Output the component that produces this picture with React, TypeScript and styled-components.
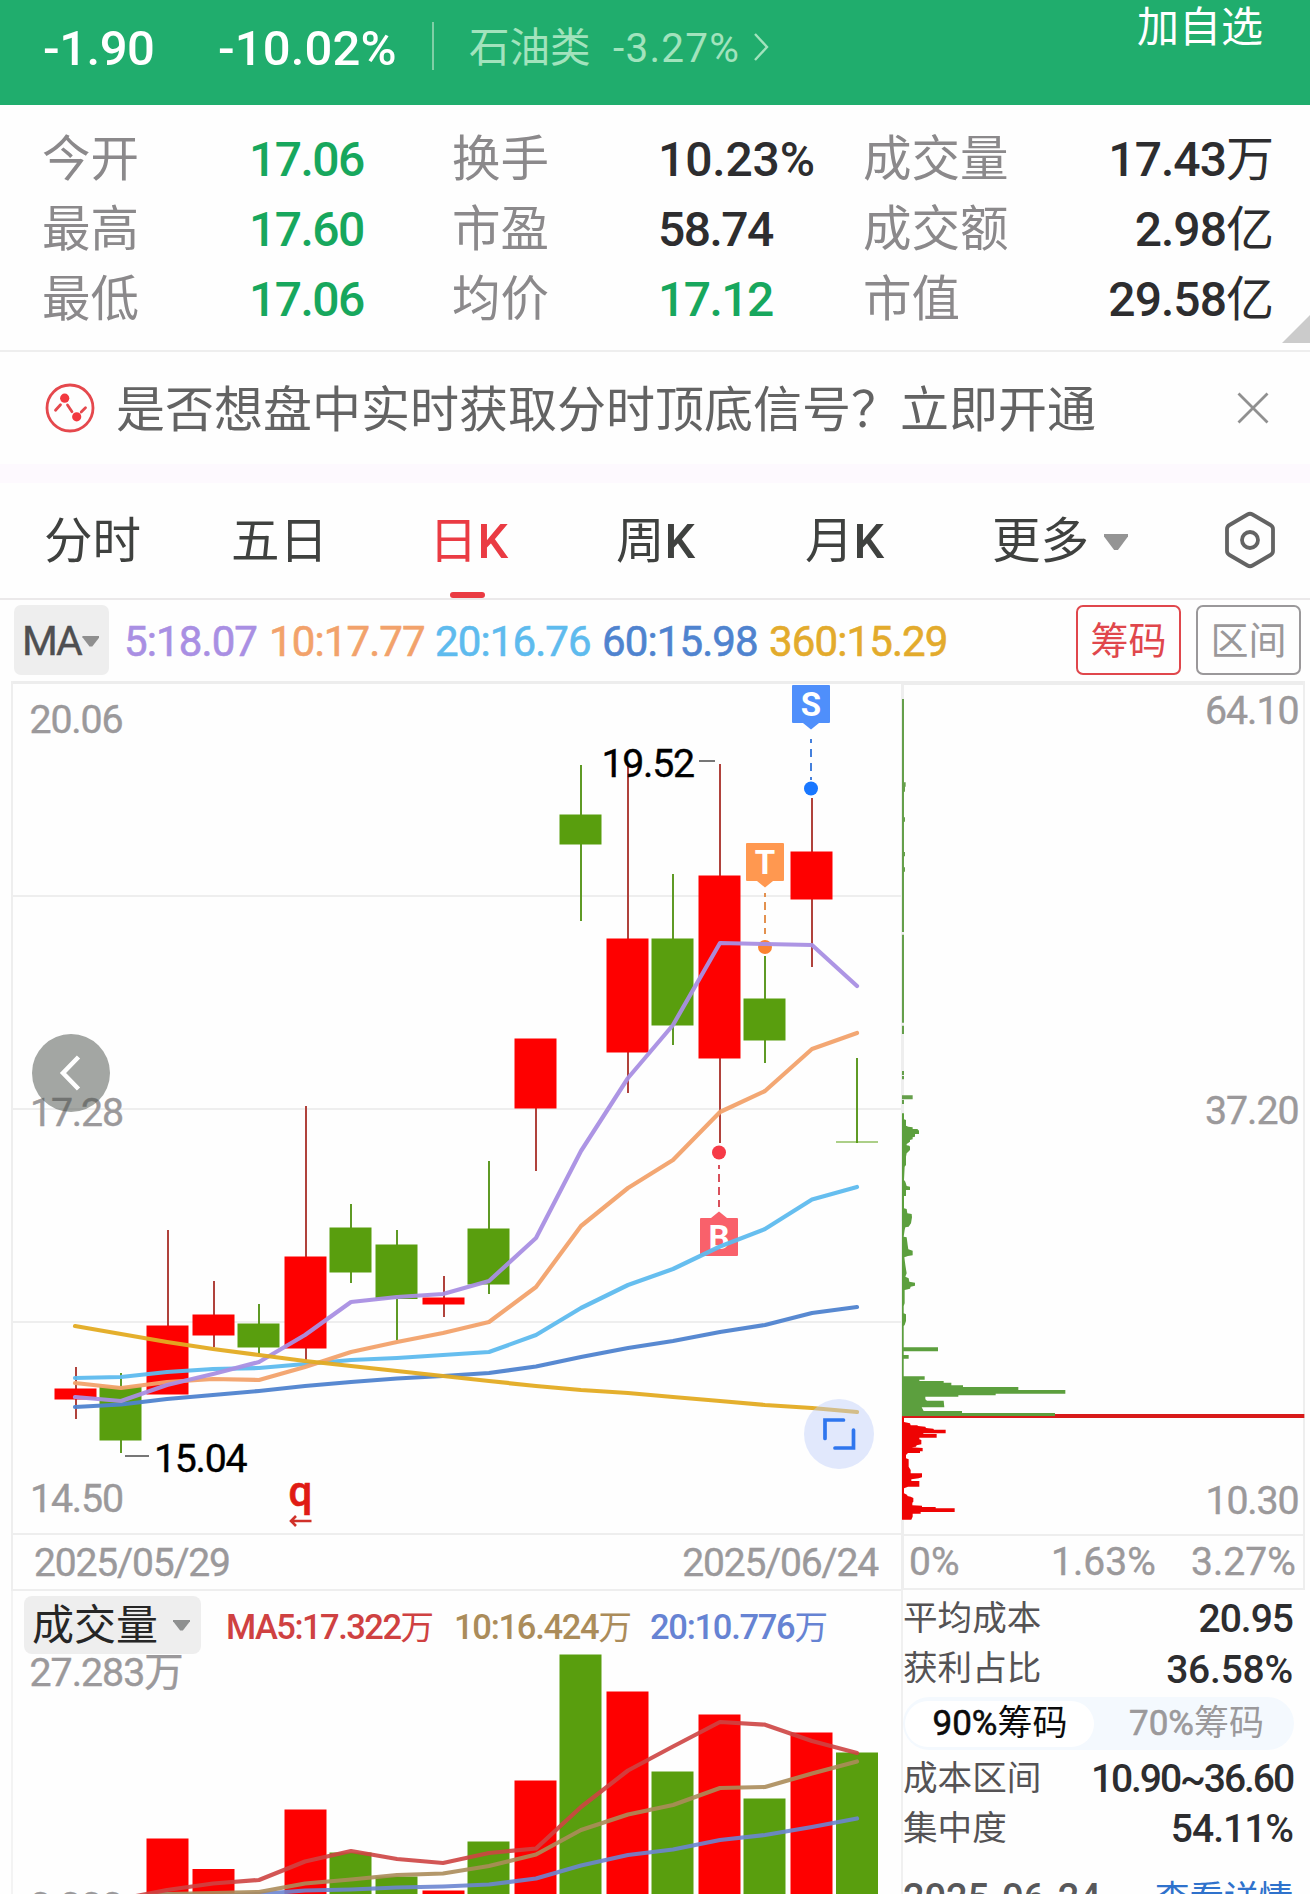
import React from 'react';
import styled, { createGlobalStyle } from 'styled-components';

const FONT = `Roboto, "Noto Sans CJK SC", sans-serif`;
const GREY = '#9b999b';
const RED = '#fe0000';
const GREEN = '#599e0e';
const LINE = '#eeeeee';

const Global = createGlobalStyle`
  html, body { margin: 0; padding: 0; background: #fefefe; overflow: hidden; }
  * { box-sizing: border-box; }
  button { font: inherit; letter-spacing: inherit; padding: 0; border: 0; background: none; }
  svg { display: block; }
`;

const Page = styled.main`
  width: 1310px;
  height: 1894px;
  overflow: hidden;
  display: flex;
  flex-direction: column;
  font-family: ${FONT};
  white-space: nowrap;
`;

const Header = styled.header`
  height: 105px;
  flex: none;
  display: flex;
  align-items: flex-start;
  padding-left: 43px;
  background: #20ad6d;
  color: #fff;
`;

const Quote = styled.span<{ $w: number; $spacing?: number }>`
  width: ${p => p.$w}px;
  flex: none;
  font-size: 49px;
  font-weight: 500;
  line-height: 98px;
  letter-spacing: ${p => p.$spacing || 0}em;
`;

const Divider = styled.span`
  width: 2px;
  height: 48px;
  margin: 22px 35px 0 0;
  background: #7fcfa6;
`;

const Sector = styled.span<{ $w: number; $spacing?: number }>`
  width: ${p => p.$w}px;
  flex: none;
  font-size: 40.5px;
  line-height: 97px;
  letter-spacing: ${p => p.$spacing || 0}em;
  color: #a2e3bd;
`;

const SectorArrow = styled.svg`
  margin-top: 31px;
`;

const Watch = styled.button`
  margin: 0 47px 0 auto;
  font-size: 42px;
  line-height: 56px;
  color: #fff;
`;

const Stats = styled.section`
  position: relative;
  flex: none;
  height: 247px;
  padding: 19px 36px 0 42px;
  display: grid;
  grid-template-columns: 207px 203px 206px 205px 160px 1fr;
  grid-auto-rows: 70px;
  border-bottom: 2px solid ${LINE};
`;

const StatLabel = styled.span`
  font-size: 48.5px;
  line-height: 71px;
  color: #8b898b;
`;

const StatValue = styled.span<{ $green?: boolean; $right?: boolean; $wide?: boolean }>`
  font-size: 48px;
  font-weight: 500;
  line-height: 71px;
  letter-spacing: ${p => (p.$wide ? -0.003 : p.$right ? -0.02 : -0.032)}em;
  text-align: ${p => (p.$right ? 'right' : 'left')};
  color: ${p => (p.$green ? '#17a75d' : '#2d2d2f')};
`;

const Unit = styled.span<{ $size?: number }>`
  font-size: ${p => p.$size || 48}px;
  font-weight: 400;
  letter-spacing: 0;
`;

const Corner = styled.span`
  position: absolute;
  right: 0;
  bottom: 7px;
  width: 28px;
  height: 28px;
  background: #cbcbcb;
  clip-path: polygon(100% 0, 100% 100%, 0 100%);
`;

const Notice = styled.section`
  height: 112px;
  flex: none;
  display: flex;
  align-items: center;
  padding: 0 40px 0 45px;
  font-size: 49px;
  color: #636363;
`;

const NoticeText = styled.span`
  margin-left: 21px;
  margin-right: auto;
  padding-top: 5px;
  line-height: 107px;
`;

const Stripe = styled.div`
  height: 19px;
  flex: none;
  background: #fdf9fe;
`;

const Tabs = styled.nav`
  height: 117px;
  flex: none;
  display: grid;
  grid-template-columns: 187px 198px 187px 189px 187px 237px 1fr;
  grid-template-rows: 115px;
  padding-left: 44px;
  border-bottom: 2px solid #ebe9ea;
`;

const Tab = styled.button<{ $active?: boolean }>`
  position: relative;
  display: flex;
  align-items: center;
  font-size: 48.5px;
  line-height: 100px;
  padding-top: 3px;
  color: ${p => (p.$active ? '#ea3b43' : '#3f413f')};
  &::after {
    content: '';
    display: ${p => (p.$active ? 'block' : 'none')};
    position: absolute;
    left: 21px;
    top: 109px;
    width: 35px;
    height: 6px;
    border-radius: 3px;
    background: #ea3b43;
  }
`;

const Letter = styled.span`
  font-weight: 500;
`;

const Caret = styled.span<{ $w: number; $h: number; $ml: number; $c?: string }>`
  width: ${p => p.$w}px;
  height: ${p => p.$h}px;
  margin-left: ${p => p.$ml}px;
  background: ${p => p.$c || '#949494'};
  clip-path: polygon(0 0, 100% 0, 100% 15%, 58% 100%, 42% 100%, 0 15%);
`;

const HexIcon = styled.svg`
  align-self: center;
  margin: -1px 0 0 -9px;
`;

const IndicatorBar = styled.section`
  height: 81px;
  flex: none;
  display: flex;
  align-items: flex-start;
  padding: 5px 9px 0 14px;
`;

const MaChip = styled.button`
  width: 95px;
  height: 70px;
  padding: 2px 0 0 8px;
  display: flex;
  align-items: center;
  margin-right: 15px;
  border-radius: 7px;
  background: #eeeeee;
  font-size: 41px;
  letter-spacing: -0.055em;
  color: #4f4f51;
  -webkit-text-stroke: 0.4px currentColor;
`;

const MaValue = styled.span<{ $c: string; $w: number }>`
  width: ${p => p.$w}px;
  flex: none;
  font-size: 42px;
  line-height: 73px;
  letter-spacing: -0.021em;
  color: ${p => p.$c};
  -webkit-text-stroke: 0.6px currentColor;
`;

const Outline = styled.button<{ $c: string }>`
  width: 105px;
  height: 70px;
  margin-left: 15px;
  border: 2px solid ${p => p.$c};
  border-radius: 7px;
  font-size: 38px;
  line-height: 68px;
  color: ${p => p.$c};
`;

const Spacer = styled.span`
  flex: 1;
`;

const Body = styled.div`
  flex: 1;
  min-height: 0;
  display: grid;
  grid-template-columns: 901px 409px;
`;

const Column = styled.div`
  display: flex;
  flex-direction: column;
  min-width: 0;
`;

const ChartFrame = styled.div`
  position: relative;
  height: 854px;
`;

const VolumeSvg = styled.svg`
  overflow: visible;
`;

const Back = styled.button`
  position: absolute;
  left: 32px;
  top: 353px;
  width: 78px;
  height: 78px;
  border-radius: 50%;
  background: rgba(72, 77, 72, 0.5);
`;

const Expand = styled.button`
  position: absolute;
  left: 804px;
  top: 718px;
  width: 70px;
  height: 70px;
  border-radius: 50%;
  background: rgba(190, 207, 251, 0.45);
`;

const Dates = styled.div`
  height: 56px;
  margin-left: 11px;
  padding: 0 23px 0 21px;
  display: flex;
  justify-content: space-between;
  border: solid ${LINE};
  border-width: 0 0 2px 2px;
  font-size: 39px;
  line-height: 56px;
  letter-spacing: -0.03em;
  color: ${GREY};
  -webkit-text-stroke: 0.4px currentColor;
`;

const VolumeBar = styled.div`
  height: 63px;
  margin-left: 11px;
  border-left: 2px solid #f3f3f3;
  padding: 5px 0 0 11px;
  display: flex;
`;

const VolumeChip = styled.button`
  width: 177px;
  height: 58px;
  margin-right: 25px;
  padding-left: 8px;
  display: flex;
  align-items: center;
  border-radius: 8px;
  background: #eeeeee;
  font-size: 42px;
  line-height: 52px;
  color: #262626;
`;

const ChipText = styled.span`
  padding-top: 1px;
`;

const VolumeMa = styled.span<{ $c: string; $w: number; $spacing?: number }>`
  width: ${p => p.$w}px;
  flex: none;
  font-size: 34.5px;
  font-weight: 500;
  line-height: 62px;
  letter-spacing: ${p => p.$spacing || -0.037}em;
  color: ${p => p.$c};
`;

const Percents = styled.div`
  height: 56px;
  width: 404px;
  padding: 0 4px 0 5px;
  display: grid;
  grid-template-columns: 142px 140px 1fr;
  border: solid ${LINE};
  border-width: 2px 2px 2px 3px;
  font-size: 39px;
  line-height: 53px;
  letter-spacing: 0.002em;
  color: ${GREY};
  -webkit-text-stroke: 0.4px currentColor;
`;

const Details = styled.div`
  flex: 1;
  padding: 3px 17px 0 0;
  border-left: 2px solid #f0f0f0;
`;

const Row = styled.div<{ $h: number }>`
  height: ${p => p.$h}px;
  display: flex;
  justify-content: space-between;
  align-items: center;
`;

const RowLabel = styled.span`
  font-size: 34.6px;
  line-height: 48px;
  margin-top: -2px;
  color: #555355;
`;

const RowValue = styled.span<{ $spacing?: number }>`
  font-size: 39px;
  font-weight: 500;
  line-height: 48px;
  padding-top: 1px;
  letter-spacing: ${p => (p.$spacing === undefined ? -0.026 : p.$spacing)}em;
  color: #2d2d2f;
`;

const Toggle = styled.div`
  width: 391px;
  height: 53px;
  margin: 3px 0 3px;
  padding: 4px 2px;
  display: grid;
  grid-template-columns: 189px 1fr;
  border-radius: 27px;
  background: #f4f9fe;
`;

const Option = styled.button<{ $on?: boolean }>`
  border-radius: 23px;
  background: ${p => (p.$on ? '#fff' : 'transparent')};
  font-size: 35px;
  line-height: 46px;
  letter-spacing: 0;
  padding-left: ${p => (p.$on ? 1 : 7)}px;
  color: ${p => (p.$on ? '#0c0c0c' : GREY)};
`;

const Percent = styled.span`
  -webkit-text-stroke: 0.6px currentColor;
`;

const DateText = styled.span`
  font-size: 38px;
  font-weight: 500;
  line-height: 48px;
  letter-spacing: -0.002em;
  color: #58585a;
`;

const Link = styled.a`
  font-size: 34.5px;
  line-height: 48px;
  color: #2f72cc;
`;

const Label = styled.text<{ $dark?: boolean }>`
  font-family: ${FONT};
  font-size: 39.3px;
  fill: ${p => (p.$dark ? '#000' : GREY)};
  stroke: ${p => (p.$dark ? '#000' : GREY)};
  stroke-width: 0.4px;
`;

const Tag = styled.text`
  font-family: ${FONT};
  font-size: 33px;
  font-weight: 700;
  text-anchor: middle;
  fill: #fff;
`;

const ExRight = styled.text`
  font-family: ${FONT};
  font-size: 42px;
  font-weight: 500;
  text-anchor: middle;
  fill: #e01b14;
  stroke: #e01b14;
  stroke-width: 0.6px;
`;

const XS = [75, 121, 167, 213, 259, 305, 351, 397, 443, 489, 536, 581, 628, 673, 720, 765, 812, 857];
const WICKS = [76, 121, 168, 214, 259, 306, 351, 397, 444, 489, 536, 581, 628, 673, 720, 765, 812, 857];
const LEFT = [54.5, 99.5, 146.5, 192.5, 237.5, 284.5, 329.5, 375.5, 422.5, 467.5, 514.5, 559.5, 606.5, 651.5, 698.5, 743.5, 790.5, 836];

type Candle = [up: 0 | 1, top: number, bottom: number, high: number, low: number];
const CANDLES: Candle[] = [
  [1, 1388.5, 1399.5, 1367, 1419],
  [0, 1386.5, 1440.5, 1373, 1453],
  [1, 1325.5, 1394.5, 1230, 1394],
  [1, 1314.5, 1335.5, 1281, 1347],
  [0, 1323.5, 1347.5, 1304, 1354],
  [1, 1256.5, 1348.5, 1106, 1360],
  [0, 1227.5, 1272.5, 1204, 1283],
  [0, 1244.5, 1299, 1230, 1340],
  [1, 1297.5, 1304.5, 1276, 1317],
  [0, 1228.5, 1284.5, 1161, 1294],
  [1, 1038.5, 1108.5, 1039, 1171],
  [0, 814.5, 844.5, 765, 921],
  [1, 938.5, 1052.5, 765, 1093],
  [0, 938.5, 1025.5, 874, 1045],
  [1, 875.5, 1058.5, 764, 1143],
  [0, 998.5, 1040.5, 956, 1063],
  [1, 851.5, 899.5, 798, 967],
  [0, 1141.3, 1142.7, 1058, 1143],
];

const MA_LINES: [string, number[]][] = [
  ['#4f83cf', [1407, 1404.5, 1399, 1395, 1391, 1386, 1382, 1378.5, 1376, 1373, 1366.5, 1357, 1348, 1341, 1332, 1325, 1313, 1307]],
  ['#5ebbee', [1378, 1377, 1372, 1369, 1368, 1364, 1360, 1358, 1355, 1352, 1335, 1308, 1285, 1269, 1246.5, 1229, 1199.5, 1187]],
  ['#f2a26b', [1383, 1388, 1382, 1379, 1380, 1367, 1352, 1342, 1333, 1322, 1287, 1226, 1188, 1160, 1112, 1091, 1049, 1033]],
  ['#a98fe3', [1397, 1401, 1385, 1374, 1362, 1335, 1302, 1297, 1294, 1281, 1238, 1151, 1078, 1025, 943, 944, 945, 986]],
  ['#e3ab22', [1326, 1334, 1342, 1349, 1355, 1361, 1366, 1371, 1376, 1381, 1386, 1390, 1393, 1397, 1401, 1405, 1408, 1412]],
];

const VOLUMES = [0, 0, 1838.5, 1869, 0, 1809.5, 1852.5, 1876.5, 1890.5, 1841.5, 1780.5, 1654.5, 1691.5, 1771.5, 1714.5, 1798.5, 1732.5, 1752.5];

const VOLUME_LINES: [string, number[]][] = [
  ['#6c85d1', [1900, 1899, 1894, 1896, 1894, 1890.5, 1889.5, 1887.5, 1886.5, 1884.5, 1878.5, 1865.5, 1855, 1849.5, 1840, 1835, 1827, 1818.5]],
  ['#ab8c5a', [1900, 1898, 1894, 1893, 1892, 1883.5, 1879.5, 1875, 1873.5, 1866, 1854.5, 1830, 1814.5, 1805, 1788, 1787, 1773.5, 1761.5]],
  ['#cd4442', [1910, 1899, 1890, 1883.5, 1880, 1861.5, 1851, 1859, 1863, 1853, 1848.5, 1807, 1770.5, 1746.5, 1722, 1724.7, 1741, 1753]],
];

const points = (ys: number[]) => ys.map((y, i) => `${XS[i]},${y}`).join(' ');

const CHIP_THIN = 'M66-1293h6v699h-6zM66-586h6v264h-6zM66-313h6v25h-6zM66-177h6v12h-6zM66-162h6v10h-6zM66-104h32v12h-32zM66-90h6v12h-6zM72-1043h5v13h-2v15h-3zM72-938h3v13h-3zM72-834h3v13h-3zM72-788h3v13h-3z';
const CHIP_LOSS = 'M66,-50L72,-50L72,-32L78,-30L78,-13L85,-10L98,-8L98,-3L112,-3L117,2V12H105V20L98,22V28L90,30V35L80,42V46L88,47L90,50V60L85,65L80,70L78,80V105L74,110L72,150L76,155L80,168L90,170V180H78V198H72V235L80,237L82,250L95,252L96,262L93,280L86,290L76,292L74,300L71,320L80,322L83,345L85,358L98,362V376L84,378L73,382L76,405L80,430L76,440L86,445L88,455L105,458V467L92,470L90,476L74,480V520L71,528V550L78,553V573L74,585L71,588V652H174V664H71V675H86V686H71V739H134V749H118V753H191V758H214V766H249V771H415V780H556V791H347V796H235V800H136V808L141,812H191L193,832H125L131,843H246V849H525V858H66Z';
const CHIP_GAIN = 'M66,862H72V876L90,880L92,886H112L114,888L136,890L138,894L160,896L162,899H197V910H130V912H170V923H118V928L124,930V943L110,946L108,950L95,952L128,954V964H120V969H84L78,975V985L86,988V1010L92,1020V1030H126V1042L116,1045L94,1048V1053H118V1070H84L72,1075V1090L82,1095V1098L92,1100L100,1104V1115L97,1118V1126L126,1127V1131H167V1135H224V1146H122V1151H98V1160L94,1169H66Z';

function PriceChart() {
  return (
    <svg width="901" height="854" viewBox="0 681 901 854">
      <path d="M11 682.5H901" stroke="#ededed" strokeWidth="3" />
      <path d="M12 681V1535M12 896H901M12 1109H901M12 1322H901M12 1534H901" stroke={LINE} strokeWidth="2" fill="none" />
      <Label x="29.5" y="733" textLength="94">20.06</Label>
      <Label x="30" y="1126" textLength="94">17.28</Label>
      <Label x="30" y="1512" textLength="94">14.50</Label>
      {CANDLES.map(([up, top, bottom, high, low], i) => (
        <g key={i}>
          <path d={`M${WICKS[i]} ${high}V${low}`} stroke={up ? '#b0423c' : '#5f9a25'} strokeWidth="2" />
          <rect x={LEFT[i]} y={top} width="42" height={bottom - top} fill={up ? RED : GREEN} opacity={i === 17 ? 0.7 : 1} />
        </g>
      ))}
      <Label $dark x="601.5" y="777" textLength="93.5">19.52</Label>
      <path d="M699 761H715M125 1456H149" stroke="#777" strokeWidth="2" />
      <Label $dark x="154" y="1472" textLength="93.5">15.04</Label>

      <path d="M793 685H829Q830 685 830 686V722Q830 723 829 723H819L811 729.5L803 723H793Q792 723 792 722V686Q792 685 793 685Z" fill="#4f8ffb" />
      <Tag x="811" y="715.5">S</Tag>
      <path d="M811 739V780" stroke="#4580dc" strokeWidth="2" strokeDasharray="8 6" strokeDashoffset="4" />
      <circle cx="811" cy="788.5" r="7" fill="#1977ff" />

      <path d="M747 843H783Q784 843 784 844V880Q784 881 783 881H773L765 887.5L757 881H747Q746 881 746 880V844Q746 843 747 843Z" fill="#ff9850" />
      <Tag x="765" y="873.5">T</Tag>
      <path d="M765 893V934" stroke="#e3914f" strokeWidth="2" strokeDasharray="8 5" strokeDashoffset="4" />
      <circle cx="765" cy="947" r="7" fill="#fb8230" />

      <circle cx="719" cy="1152.5" r="7" fill="#f63a47" />
      <path d="M719 1165V1207" stroke="#d9505b" strokeWidth="2" strokeDasharray="8 5" strokeDashoffset="4" />
      <path d="M701 1218H711L719 1211.5L727 1218H737Q738 1218 738 1219V1255Q738 1256 737 1256H701Q700 1256 700 1255V1219Q700 1218 701 1218Z" fill="#f9616b" />
      <Tag x="719" y="1248.5">B</Tag>

      {MA_LINES.map(([color, ys]) => (
        <polyline key={color} points={points(ys)} fill="none" stroke={color} strokeWidth="4.2" strokeLinecap="round" strokeLinejoin="round" opacity="0.95" />
      ))}

      <ExRight x="300.5" y="1505.5">q</ExRight>
      <path d="M311.5 1521H291M296 1516L291 1521L296 1526" fill="none" stroke="#d0312a" strokeWidth="2.6" />
    </svg>
  );
}

function VolumeChart() {
  return (
    <VolumeSvg width="901" height="240" viewBox="0 1654 901 240">
      <path d="M12 1654V1894" stroke="#f3f3f3" strokeWidth="2" />
      <Label x="29.5" y="1686" textLength="154">27.283万</Label>
      <Label x="29.5" y="1919.5" textLength="94">0.000</Label>
      {VOLUMES.map((top, i) =>
        top ? <rect key={i} x={LEFT[i]} y={top} width="42" height={1900 - top} fill={CANDLES[i][0] ? RED : GREEN} /> : null
      )}
      {VOLUME_LINES.map(([color, ys]) => (
        <polyline key={color} points={points(ys)} fill="none" stroke={color} strokeWidth="4.2" strokeLinecap="round" strokeLinejoin="round" opacity="0.9" />
      ))}
    </VolumeSvg>
  );
}

function ChipChart() {
  return (
    <svg width="409" height="853" viewBox="901 681 409 853">
      <path d="M901 683H1305" stroke="#ededed" strokeWidth="4" />
      <path d="M902.3 684V1534" stroke={LINE} strokeWidth="3.5" />
      <path d="M1304 681V1534" stroke={LINE} strokeWidth="2" />
      <Label x="1205" y="724" textLength="94.5">64.10</Label>
      <Label x="1205" y="1124" textLength="94.5">37.20</Label>
      <Label x="1205.5" y="1514" textLength="94">10.30</Label>
      <g transform="translate(880 1130) scale(0.33333)">
        <path d="M66 858H1273" stroke="#d81a1a" strokeWidth="12" />
        <path d={CHIP_THIN} fill="#659f4b" />
        <path d={CHIP_LOSS} fill="#5c9f3e" />
        <path d={CHIP_GAIN} fill="#ee0303" />
      </g>
    </svg>
  );
}

const STATS: [string, string, string, boolean][][] = [
  [['今开', '17.06', '', true], ['换手', '10.23%', '', false], ['成交量', '17.43', '万', false]],
  [['最高', '17.60', '', true], ['市盈', '58.74', '', false], ['成交额', '2.98', '亿', false]],
  [['最低', '17.06', '', true], ['均价', '17.12', '', true], ['市值', '29.58', '亿', false]],
];

export default function App() {
  return (
    <Page>
      <Global />
      <Header>
        <Quote $w={175} $spacing={-0.01}>-1.90</Quote>
        <Quote $w={214} $spacing={0.003}>-10.02%</Quote>
        <Divider />
        <Sector $w={144}>石油类</Sector>
        <Sector $w={139} $spacing={0.03}>-3.27%</Sector>
        <SectorArrow width="18" height="32" viewBox="0 0 18 32">
          <path d="M3 3L15 16L3 29" fill="none" stroke="#a2e3bd" strokeWidth="2.4" />
        </SectorArrow>
        <Watch>加自选</Watch>
      </Header>

      <Stats>
        {STATS.map((row, r) =>
          row.map(([label, value, unit, green], c) => (
            <React.Fragment key={`${r}${c}`}>
              <StatLabel>{label}</StatLabel>
              <StatValue $green={green} $right={c === 2} $wide={value.endsWith('%')}>
                {value}
                {unit && <Unit>{unit}</Unit>}
              </StatValue>
            </React.Fragment>
          ))
        )}
        <Corner />
      </Stats>

      <Notice>
        <svg width="50" height="50" viewBox="0 0 50 50">
          <circle cx="25" cy="25" r="23" fill="none" stroke="#e5484d" strokeWidth="2.8" />
          <path d="M10.5 27.3L15.5 21.8M22.5 22L27 28.7M36.2 29L40.5 24.8" fill="none" stroke="#e5484d" strokeWidth="2.8" strokeLinecap="round" />
          <circle cx="19.7" cy="15.2" r="4.6" fill="#f2383f" />
          <circle cx="31.7" cy="33.8" r="4.6" fill="#f2383f" />
        </svg>
        <NoticeText>是否想盘中实时获取分时顶底信号？立即开通</NoticeText>
        <svg width="34" height="34" viewBox="0 0 34 34">
          <path d="M2.5 2.5L31.5 31.5M31.5 2.5L2.5 31.5" stroke="#909090" strokeWidth="2.8" />
        </svg>
      </Notice>
      <Stripe />

      <Tabs>
        <Tab>分时</Tab>
        <Tab>五日</Tab>
        <Tab $active>日<Letter>K</Letter></Tab>
        <Tab>周<Letter>K</Letter></Tab>
        <Tab>月<Letter>K</Letter></Tab>
        <Tab>更多<Caret $w={24} $h={16} $ml={15} /></Tab>
        <HexIcon width="60" height="60" viewBox="0 0 60 60">
          <path d="M27.5 4.5Q30 3 32.5 4.5L50.5 15Q53 16.5 53 19V41Q53 43.5 50.5 45L32.5 55.5Q30 57 27.5 55.5L9.5 45Q7 43.5 7 41V19Q7 16.5 9.5 15Z" fill="none" stroke="#636363" strokeWidth="3.8" />
          <circle cx="30" cy="30" r="8" fill="none" stroke="#636363" strokeWidth="3.8" />
        </HexIcon>
      </Tabs>

      <IndicatorBar>
        <MaChip>MA<Caret $w={17} $h={11} $ml={2} $c="#8f8f8f" /></MaChip>
        <MaValue $w={145} $c="#a98fe3">5:18.07</MaValue>
        <MaValue $w={166} $c="#f2a26b">10:17.77</MaValue>
        <MaValue $w={167} $c="#5ebbee">20:16.76</MaValue>
        <MaValue $w={167} $c="#4f83cf">60:15.98</MaValue>
        <MaValue $w={180} $c="#e3ab2c">360:15.29</MaValue>
        <Spacer />
        <Outline $c="#e0474c">筹码</Outline>
        <Outline $c="#9a989a">区间</Outline>
      </IndicatorBar>

      <Body>
        <Column>
          <ChartFrame>
            <PriceChart />
            <Back aria-label="back">
              <svg width="78" height="78" viewBox="0 0 78 78">
                <path d="M46.5 23L31 39L46.5 55" fill="none" stroke="#fff" strokeWidth="4.5" />
              </svg>
            </Back>
            <Expand aria-label="expand">
              <svg width="70" height="70" viewBox="0 0 70 70">
                <path d="M39.5 21H21V39.5M49.5 31V49H31" fill="none" stroke="#2f76ee" strokeWidth="3.7" strokeLinecap="round" />
              </svg>
            </Expand>
          </ChartFrame>
          <Dates>
            <span>2025/05/29</span>
            <span>2025/06/24</span>
          </Dates>
          <VolumeBar>
            <VolumeChip><ChipText>成交量</ChipText><Caret $w={17} $h={11} $ml={15} $c="#8e9090" /></VolumeChip>
            <VolumeMa $w={228} $c="#cf4141" $spacing={-0.044}>MA5:17.322<Unit $size={33.5}>万</Unit></VolumeMa>
            <VolumeMa $w={196} $c="#ab8c5a">10:16.424<Unit $size={33.5}>万</Unit></VolumeMa>
            <VolumeMa $w={180} $c="#6683d3">20:10.776<Unit $size={33.5}>万</Unit></VolumeMa>
          </VolumeBar>
          <VolumeChart />
        </Column>

        <Column>
          <ChipChart />
          <Percents>
            <span>0%</span>
            <span>1.63%</span>
            <span>3.27%</span>
          </Percents>
          <Details>
            <Row $h={51}><RowLabel>平均成本</RowLabel><RowValue>20.95</RowValue></Row>
            <Row $h={50}><RowLabel>获利占比</RowLabel><RowValue $spacing={-0.006}>36.58%</RowValue></Row>
            <Toggle>
              <Option $on><Percent>90%</Percent>筹码</Option>
              <Option><Percent>70%</Percent>筹码</Option>
            </Toggle>
            <Row $h={51}><RowLabel>成本区间</RowLabel><RowValue $spacing={-0.053}>10.90~36.60</RowValue></Row>
            <Row $h={49}><RowLabel>集中度</RowLabel><RowValue>54.11%</RowValue></Row>
            <Row $h={90}><DateText>2025-06-24</DateText><Link>查看详情</Link></Row>
          </Details>
        </Column>
      </Body>
    </Page>
  );
}
